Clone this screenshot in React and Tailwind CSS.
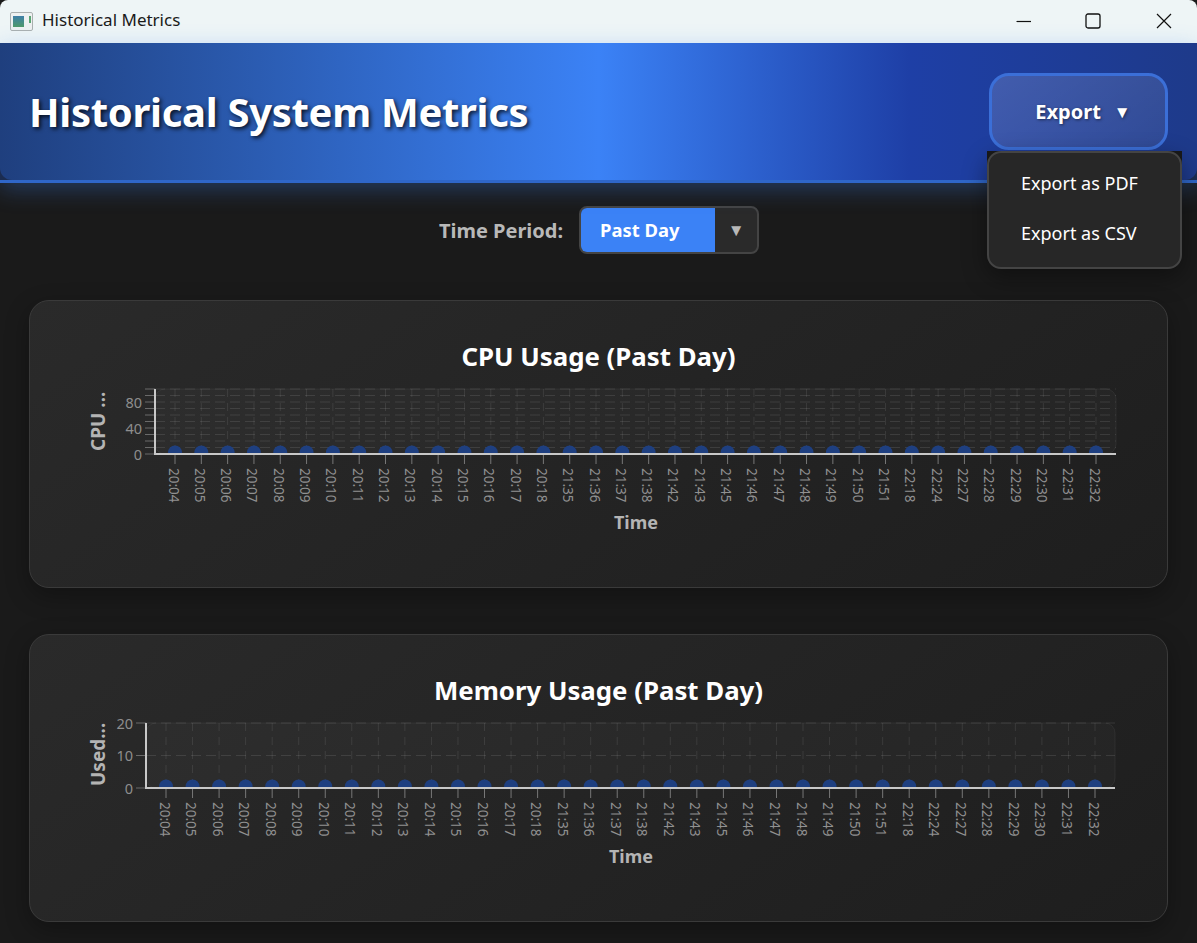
const labels = ["20:04","20:05","20:06","20:07","20:08","20:09","20:10","20:11","20:12","20:13","20:14","20:15","20:16","20:17","20:18","21:35","21:36","21:37","21:38","21:42","21:43","21:45","21:46","21:47","21:48","21:49","21:50","21:51","22:18","22:24","22:27","22:28","22:29","22:30","22:31","22:32"];

function Chart({ id, left, top, bottom, right, yTicks, yLabels, yTitle, xTitleX, yTitleY }) {
  const n = labels.length;
  const x0 = left + 20;
  const x1 = right - 20;
  const xs = labels.map((_, i) => x0 + ((x1 - x0) * i) / (n - 1));
  const max = yTicks[yTicks.length - 1];
  const yOf = (v) => bottom - ((bottom - top) * v) / max;
  const ff = "'Noto Sans', sans-serif";
  return (
    <svg viewBox={`80 ${top - 9} 1050 155`} className="block w-[1050px] h-[155px]" style={{ fontFamily: ff }}>
      <defs>
        <clipPath id={`${id}-clip`}>
          <rect x={left} y={top} width={right - left} height={bottom - top} />
        </clipPath>
        <linearGradient id={`${id}-line`} x1="0" x2="1" y1="0" y2="0">
          <stop offset="0" stopColor="#1e3a7a" />
          <stop offset="1" stopColor="#2a5ab4" />
        </linearGradient>
      </defs>
      <rect x={left} y={top} width={right - left} height={bottom - top} rx="10" fill="rgba(255,255,255,0.025)" stroke="rgba(255,255,255,0.06)" />
      {yTicks.map((v) => (
        <g key={v}>
          <line x1={left - 10} x2={left} y1={yOf(v)} y2={yOf(v)} stroke="#6a6a6a" />
          {v > 0 && <line x1={left} x2={right} y1={yOf(v)} y2={yOf(v)} stroke="rgba(255,255,255,0.1)" strokeDasharray="10 5" />}
        </g>
      ))}
      {xs.map((x) => (
        <g key={x}>
          <line x1={x} x2={x} y1={top} y2={bottom} stroke="rgba(255,255,255,0.09)" strokeDasharray="8 6" />
          <line x1={x} x2={x} y1={bottom} y2={bottom + 10} stroke="#777" />
        </g>
      ))}
      <g clipPath={`url(#${id}-clip)`}>
        <line x1={x0} x2={x1} y1={bottom - 2.5} y2={bottom - 2.5} stroke={`url(#${id}-line)`} strokeWidth="3" />
        {xs.map((x) => (
          <circle key={x} cx={x} cy={bottom - 1.5} r="7" fill="#1e3f80" />
        ))}
      </g>
      <line x1={left} x2={left} y1={top} y2={bottom + 1} stroke="#c8c8c8" strokeWidth="2" />
      <line x1={left} x2={right} y1={bottom} y2={bottom} stroke="#c8c8c8" strokeWidth="2" />
      {yLabels.map((v) => (
        <text key={v} x={left - 13} y={yOf(v) + 5.5} textAnchor="end" fontSize="14.5" fill="#8e8e8e">{v}</text>
      ))}
      {labels.map((l, i) => (
        <text key={i} transform={`translate(${xs[i] - 6.5} ${bottom + 14}) rotate(90)`} fontSize="13.5" fill="#909090">{l}</text>
      ))}
      <text transform={`translate(105 ${yTitleY}) rotate(-90)`} fontSize="19" fontWeight="700" fill="#b4b4b4">{yTitle}</text>
      <text x={xTitleX} y={bottom + 75} textAnchor="middle" fontSize="18" fontWeight="700" fill="#b4b4b4">Time</text>
    </svg>
  );
}

function Card({ title, children }) {
  return (
    <section className="mx-[29px] h-[288px] rounded-[20px] border border-[#3a3a3a] bg-[linear-gradient(145deg,#2a2a2a,#1e1e1e)] shadow-[0_8px_24px_rgba(0,0,0,0.3)] pt-[39px] px-[50px]">
      <h2 className="text-center text-[25.8px] leading-[32px] font-bold text-white">{title}</h2>
      <div className="mt-[8px]">{children}</div>
    </section>
  );
}

export default function App() {
  return (
    <div className="w-[1197px] h-[943px] overflow-hidden bg-[#1a1a1a] flex flex-col font-['Noto_Sans',sans-serif]">
      <div className="h-[43px] shrink-0 bg-[#eef5f6] rounded-t-lg flex items-center pl-[10px]">
        <svg width="23" height="19" viewBox="0 0 23 19">
          <rect x="0.5" y="0.5" width="22" height="18" rx="1.5" fill="#eef1f1" stroke="#aab0b0" />
          <defs>
            <linearGradient id="ico" x1="0" y1="0" x2="0" y2="1">
              <stop offset="0" stopColor="#3f7fa8" />
              <stop offset="1" stopColor="#4f9a6a" />
            </linearGradient>
          </defs>
          <rect x="3" y="4" width="11" height="11" fill="url(#ico)" />
          <rect x="19" y="4" width="2" height="7" fill="#5aa574" />
        </svg>
        <span className="ml-[9px] mb-[3px] text-[17px] text-[#1a1a1a]">Historical Metrics</span>
        <div className="ml-auto flex items-center mb-[1px]">
          <svg width="16" height="16" viewBox="0 0 16 16" className="mr-[53px]"><line x1="0.5" x2="15" y1="8.5" y2="8.5" stroke="#111" strokeWidth="1.2" /></svg>
          <svg width="16" height="16" viewBox="0 0 16 16" className="mr-[55px]"><rect x="1" y="1" width="14" height="14" rx="2" fill="none" stroke="#111" strokeWidth="1.3" /></svg>
          <svg width="16" height="16" viewBox="0 0 16 16" className="mr-[25px]"><path d="M1 1 L15 15 M15 1 L1 15" fill="none" stroke="#111" strokeWidth="1.2" /></svg>
        </div>
      </div>

      <header className="relative z-10 h-[140px] shrink-0 bg-[#1b2c50] border-b-[3px] border-[#2f66c8] shadow-[0_6px_22px_rgba(59,130,246,0.32)]">
        <div className="h-full rounded-b-[12px] bg-[linear-gradient(90deg,#1f3f7e_0%,#3b82f6_50%,#1e3fa6_76%,#1e3a8a_100%)] flex items-center justify-between pl-[29px] pr-[29px]">
          <h1 className="text-[40px] leading-[50px] font-bold tracking-[-0.3px] text-white [text-shadow:2px_2px_4px_rgba(0,0,0,0.8)]">Historical System Metrics</h1>
          <div className="relative">
            <button className="w-[179px] h-[77px] rounded-[20px] border-[3px] border-[#3b6fd8] bg-[linear-gradient(145deg,rgba(255,255,255,0.16),rgba(255,255,255,0.08))] text-[20px] font-bold text-white flex items-center justify-center gap-[13px] pl-[9px] [text-shadow:1px_1px_3px_rgba(0,0,0,0.5)]">
              <span>Export</span>
              <span className="text-[17px] font-normal">▼</span>
            </button>
            <div className="absolute left-[-2px] top-[78px] w-[195px] h-[118px] bg-[#1a1a1a] rounded-b-[14px]">
              <div className="h-full rounded-[14px] border-2 border-[#444444] bg-[#272727] shadow-[0_8px_24px_rgba(0,0,0,0.4)] text-[18px] text-white pt-[5px] pl-[32px]">
                <div className="h-[50px] leading-[50px]">Export as PDF</div>
                <div className="h-[50px] leading-[50px]">Export as CSV</div>
              </div>
            </div>
          </div>
        </div>
      </header>

      <div className="flex items-center justify-center gap-[16px] mt-[23px] mb-[46px] h-[48px] shrink-0 pl-[1px]">
        <span className="pt-[2px] text-[20px] font-bold text-[#b8b8b8]">Time Period:</span>
        <div className="w-[180px] h-[48px] rounded-[8px] border-2 border-[#444444] bg-[#2a2a2a] flex overflow-hidden">
          <div className="w-[134px] bg-[#3b82f6] text-[18.4px] font-bold text-white flex items-center pl-[19px]">Past Day</div>
          <div className="flex-1 flex items-center justify-center text-[17px] text-[#b8b8b8]">▼</div>
        </div>
      </div>

      <div className="flex flex-col gap-[46px]">
        <Card title="CPU Usage (Past Day)">
          <Chart id="cpu" left={155} right={1116} top={389} bottom={454} yTicks={[0,10,20,30,40,50,60,70,80,90,100]} yLabels={[0,40,80]} yTitle="CPU ..." xTitleX={636} yTitleY={451} />
        </Card>
        <Card title="Memory Usage (Past Day)">
          <Chart id="mem" left={146} right={1115} top={723} bottom={788} yTicks={[0,10,20]} yLabels={[0,10,20]} yTitle="Used..." xTitleX={631} yTitleY={786} />
        </Card>
      </div>
    </div>
  );
}
